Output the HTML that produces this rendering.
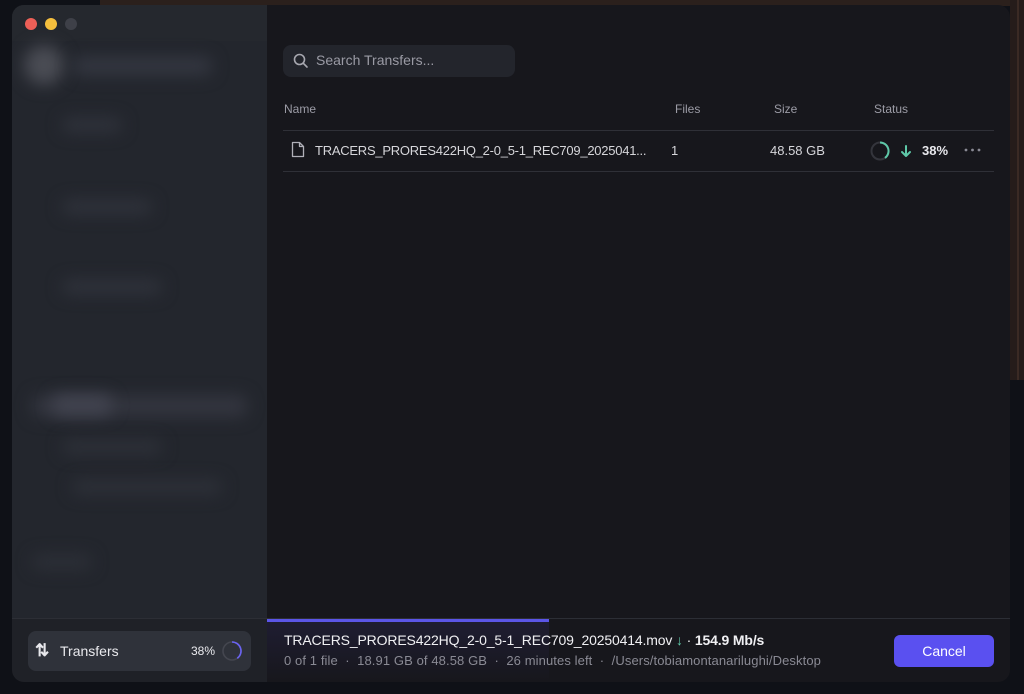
<!DOCTYPE html>
<html><head><style>
*{margin:0;padding:0;box-sizing:border-box}
body{width:1024px;height:694px;overflow:hidden;background:#0f1117;font-family:"Liberation Sans",sans-serif;position:relative}
.abs{position:absolute}
.win{left:12px;top:5px;width:998px;height:677px;border-radius:12px;overflow:hidden;background:#17171c}
.side{left:0;top:0;width:255px;height:614px;background:#23262d;overflow:hidden}
.blob{position:absolute;background:#3a3d47;filter:blur(8px);border-radius:8px}
.t{position:absolute;white-space:nowrap}
</style></head><body>
<div class="abs" style="left:100px;top:0;width:924px;height:6px;background:#2b201c"></div>
<div class="abs" style="left:1010px;top:0;width:14px;height:380px;background:#251c1a"></div>
<div class="abs" style="left:1017px;top:0;width:2px;height:380px;background:#3a2a24"></div>
<div class="abs win">
 <div class="abs side">
  <div class="abs" style="left:0;top:0;width:255px;height:36px;background:#25282e"></div>
  <div class="blob" style="left:12px;top:40px;width:40px;height:40px;background:#4a4c54;border-radius:20px"></div>
  <div class="blob" style="left:60px;top:52px;width:140px;height:18px;background:#343741"></div>
  <div class="blob" style="left:50px;top:113px;width:60px;height:14px;background:#30333c"></div>
  <div class="blob" style="left:50px;top:195px;width:90px;height:14px;background:#30333c"></div>
  <div class="blob" style="left:50px;top:275px;width:100px;height:14px;background:#30333c"></div>
  <div class="blob" style="left:20px;top:390px;width:215px;height:22px;background:#33353f"></div>
  <div class="blob" style="left:40px;top:390px;width:60px;height:20px;background:#424450"></div>
  <div class="blob" style="left:50px;top:435px;width:100px;height:14px;background:#2e3139"></div>
  <div class="blob" style="left:60px;top:475px;width:150px;height:14px;background:#2e3139"></div>
  <div class="blob" style="left:20px;top:550px;width:60px;height:14px;background:#2d3038"></div>
 </div>
 <div class="abs" style="left:13px;top:13px;width:12px;height:12px;border-radius:6px;background:#ed5f57"></div>
 <div class="abs" style="left:33px;top:13px;width:12px;height:12px;border-radius:6px;background:#f5bf3d"></div>
 <div class="abs" style="left:53px;top:13px;width:12px;height:12px;border-radius:6px;background:#3e4048"></div>

 <div class="abs" style="left:271px;top:40px;width:232px;height:32px;border-radius:8px;background:#23252c"></div>
 <svg class="abs" style="left:281px;top:48px" width="16" height="16" viewBox="0 0 16 16"><circle cx="6.5" cy="6.5" r="5" fill="none" stroke="#a8a8b0" stroke-width="1.6"/><path d="M10.2 10.2L14 14" stroke="#a8a8b0" stroke-width="1.6" stroke-linecap="round"/></svg>
 <div class="t" style="left:304px;top:47px;font-size:14px;color:#9a9aa4">Search Transfers...</div>

 <div class="t" style="left:272px;top:97px;font-size:12px;color:#9c9ca6">Name</div>
 <div class="t" style="left:663px;top:97px;font-size:12px;color:#9c9ca6">Files</div>
 <div class="t" style="left:762px;top:97px;font-size:12px;color:#9c9ca6">Size</div>
 <div class="t" style="left:862px;top:97px;font-size:12px;color:#9c9ca6">Status</div>
 <div class="abs" style="left:271px;top:125px;width:711px;height:1px;background:#2f3037"></div>
 <div class="abs" style="left:271px;top:166px;width:711px;height:1px;background:#2f3037"></div>
 <svg class="abs" style="left:279px;top:136px" width="14" height="17" viewBox="0 0 14 17"><path d="M1.5 1.5h7l4 4v10h-11z M8.5 1.5v4h4" fill="none" stroke="#b0b0b8" stroke-width="1.3" stroke-linejoin="round"/></svg>
 <div class="t" style="left:303px;top:138px;font-size:13px;color:#d6d6da;letter-spacing:-0.25px">TRACERS_PRORES422HQ_2-0_5-1_REC709_2025041...</div>
 <div class="t" style="left:659px;top:138px;font-size:13px;color:#d6d6da">1</div>
 <div class="t" style="left:758px;top:138px;font-size:13px;color:#d6d6da">48.58 GB</div>
 <svg class="abs" style="left:858px;top:136px" width="20" height="20" viewBox="0 0 20 20"><circle cx="10" cy="10" r="8.5" fill="none" stroke="#34353c" stroke-width="2"/><path d="M10 1.5A8.5 8.5 0 0 1 15 16.9" fill="none" stroke="#5ec8a8" stroke-width="2"/></svg>
 <svg class="abs" style="left:888px;top:139px" width="12" height="14" viewBox="0 0 12 14"><path d="M6 2v10M2 8l4 4 4-4" fill="none" stroke="#5ec8a8" stroke-width="2" stroke-linecap="round" stroke-linejoin="round"/></svg>
 <div class="t" style="left:910px;top:138px;font-size:13px;font-weight:bold;color:#e8e8ec">38%</div>
 <svg class="abs" style="left:952px;top:143px" width="18" height="4" viewBox="0 0 18 4"><circle cx="2" cy="2" r="1.4" fill="#8a8a94"/><circle cx="8.5" cy="2" r="1.4" fill="#8a8a94"/><circle cx="15" cy="2" r="1.4" fill="#8a8a94"/></svg>

 <div class="abs" style="left:0;top:613px;width:998px;height:1px;background:#2c2e35"></div>
 <div class="abs" style="left:0;top:614px;width:255px;height:63px;background:#1f2127"></div>
 <div class="abs" style="left:255px;top:614px;width:282px;height:63px;background:linear-gradient(#1f1d33,#17171c)"></div>
 <div class="abs" style="left:255px;top:614px;width:282px;height:3px;background:#5b55e8"></div>
 <div class="abs" style="left:16px;top:626px;width:223px;height:40px;border-radius:8px;background:#2f323a"></div>
 <div class="t" style="left:23px;top:636px;font-size:17px;font-weight:bold;color:#e8e8ec">⇅</div>
 <div class="t" style="left:48px;top:638px;font-size:14px;color:#eaeaee">Transfers</div>
 <div class="t" style="left:179px;top:639px;font-size:12px;color:#eaeaee">38%</div>
 <svg class="abs" style="left:209px;top:635px" width="22" height="22" viewBox="0 0 22 22"><circle cx="11" cy="11" r="9" fill="none" stroke="#44464f" stroke-width="1.6"/><path d="M11 2A9 9 0 0 1 16.3 18.3" fill="none" stroke="#6a63f0" stroke-width="1.6"/></svg>
 <div class="t" style="left:272px;top:627px;font-size:14px;color:#f0f0f3;letter-spacing:-0.15px">TRACERS_PRORES422HQ_2-0_5-1_REC709_20250414.mov <span style="color:#5ec8a8;font-weight:bold">↓</span> · <b>154.9 Mb/s</b></div>
 <div class="t" style="left:272px;top:648px;font-size:13px;color:#8a8a94;letter-spacing:0.1px">0 of 1 file &nbsp;·&nbsp; 18.91 GB of 48.58 GB &nbsp;·&nbsp; 26 minutes left &nbsp;·&nbsp; /Users/tobiamontanarilughi/Desktop</div>
 <div class="abs" style="left:882px;top:630px;width:100px;height:32px;border-radius:6px;background:#5a50f0;color:#fff;font-size:14px;text-align:center;line-height:32px">Cancel</div>
</div>
</body></html>
